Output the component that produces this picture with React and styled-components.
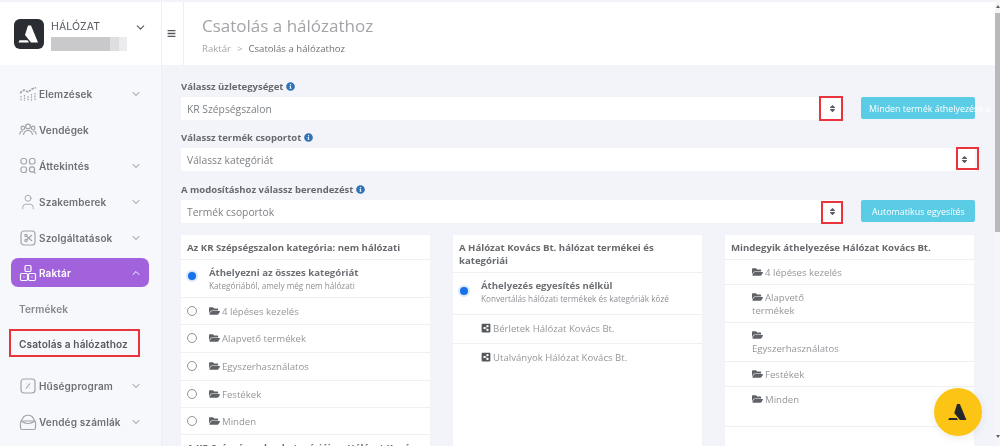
import React from "react";
import styled, { createGlobalStyle } from "styled-components";
import { ChevronDown, ChevronUp, User } from "lucide-react";
import { FaBars, FaFolderOpen, FaInfoCircle, FaShareAltSquare, FaSort } from "react-icons/fa";

const Global = createGlobalStyle`
  html, body { margin: 0; padding: 0; height: 446px; overflow: hidden; background: #f3f4f9; }
  * { box-sizing: border-box; }
`;

const Page = styled.div`
  position: relative;
  width: 1000px;
  height: 446px;
  display: flex;
  overflow: hidden;
  padding-top: 2px;
  background: #f3f4f9;
  font-family: "Open Sans", sans-serif;
  filter: blur(0.5px);
`;

const Sidebar = styled.aside`
  width: 162px;
  flex: none;
  background: #f7f8fc;
  border-right: 1px solid #eeeff4;
  display: flex;
  flex-direction: column;
  font-family: Inter, sans-serif;
`;

const Brand = styled.div`
  height: 63px;
  background: #fff;
  display: flex;
  align-items: center;
  padding: 0 15px 0 14px;
  gap: 7px;
`;

const BrandText = styled.div`
  flex: 1;
  display: flex;
  flex-direction: column;
  gap: 3px;
  padding-top: 3px;
`;

const BrandName = styled.div`
  font-size: 10.5px;
  line-height: 14px;
  color: #555a60;
  letter-spacing: 0.1px;
`;

const BrandBlur = styled.div`
  width: 76px;
  height: 14px;
  background: linear-gradient(90deg, #c9c9cc 0 78%, #dedee0 78% 90%, #ececee 90%);
`;

const BrandChevron = styled(ChevronDown)`
  flex: none;
  margin-top: -13px;
`;

const Nav = styled.nav`
  display: flex;
  flex-direction: column;
  padding: 11px 12px 0 11px;
`;

const NavItem = styled.div`
  height: ${(p) => p.$h || 36}px;
  display: flex;
  align-items: center;
  gap: 2px;
  padding: 0 7px 0 8px;
  border-radius: 7px;
  font-size: 10px;
  font-weight: 600;
  letter-spacing: 0.15px;
  white-space: nowrap;
  color: ${(p) => (p.$active ? "#fff" : "#6d7075")};
  background: ${(p) => (p.$active ? "#a162db" : "transparent")};
  & > span { flex: 1; }
`;

const NavIcon = styled.svg`
  width: 18px;
  height: 18px;
  flex: none;
  fill: none;
  stroke: ${(p) => (p.$active ? "#fff" : "#a2a4a9")};
  stroke-width: 1.2;
`;

const SubItem = styled.div`
  height: 35px;
  display: flex;
  align-items: center;
  padding-left: 8px;
  font-size: 10.1px;
  font-weight: 600;
  letter-spacing: 0.1px;
  color: ${(p) => (p.$current ? "#55585d" : "#85888d")};
`;

const Spacer = styled.div`
  height: ${(p) => p.$h}px;
  flex: none;
`;

const Main = styled.main`
  flex: 1;
  min-width: 0;
  display: flex;
  flex-direction: column;
`;

const Header = styled.header`
  height: 63px;
  flex: none;
  background: #fff;
  display: flex;
`;

const MenuCell = styled.div`
  width: 22px;
  flex: none;
  display: flex;
  align-items: center;
  justify-content: center;
  border-right: 1px solid #eeeff3;
  color: #55585c;
  font-size: 9px;
  padding-right: 2px;
`;

const Titles = styled.div`
  padding: 11px 0 0 18px;
`;

const Title = styled.h1`
  margin: 0;
  font-size: 17px;
  line-height: 26px;
  font-weight: 400;
  color: #a2a4a7;
`;

const Crumbs = styled.div`
  margin-top: 4px;
  display: flex;
  gap: 6px;
  font-size: 9.6px;
  line-height: 12px;
  color: #a6a8ab;
  & b { font-weight: 400; color: #6f7276; }
`;

const Content = styled.div`
  flex: 1;
  padding: 15px 25px 0 19px;
  overflow: hidden;
`;

const Label = styled.div`
  display: flex;
  align-items: center;
  gap: 3px;
  height: 12px;
  font-size: 9.5px;
  font-weight: 700;
  color: #66696d;
  & svg { color: #2f72b5; width: 9px; height: 9px; }
`;

const Row = styled.div`
  display: flex;
  gap: 18px;
  margin: 5px 0 ${(p) => p.$mb}px;
`;

const Select = styled.div`
  flex: 1;
  height: 23px;
  background: #fff;
  display: flex;
  align-items: center;
  justify-content: space-between;
  padding: 0 7px 0 6px;
  font-size: 10.3px;
  color: #7d8084;
  & svg { color: #5a5d61; width: 7px; height: 9px; }
`;

const ActionButton = styled.div`
  width: 114px;
  flex: none;
  height: 22px;
  background: #5accE6;
  border-radius: 2px;
  color: #fff;
  font-size: 8.9px;
  display: flex;
  align-items: center;
  padding-left: ${(p) => p.$pad}px;
  white-space: nowrap;
`;

const Columns = styled.div`
  margin-top: 12px;
  display: grid;
  grid-template-columns: 249px 249px 249px;
  gap: 23px;
`;

const Panel = styled.section`
  background: #fff;
  height: 230px;
  overflow: hidden;
`;

const PanelHead = styled.div`
  padding: 6px 6px 5px 6px;
  font-size: 9.6px;
  line-height: 13px;
  font-weight: 700;
  color: #66696d;
  border-bottom: 1px solid #eef0f2;
`;

const Item = styled.div`
  height: ${(p) => p.$h}px;
  border-bottom: 1px solid ${(p) => (p.$last ? "transparent" : "#eef0f2")};
  display: flex;
  align-items: flex-start;
  padding-top: ${(p) => p.$top || 7}px;
  font-size: 9.6px;
  line-height: 13px;
  color: #94979a;
`;

const RadioCell = styled.div`
  width: 28px;
  flex: none;
  padding: ${(p) => p.$top || 0}px 0 0 6px;
`;

const Radio = styled.span`
  display: block;
  width: ${(p) => (p.$on ? 12 : 10)}px;
  height: ${(p) => (p.$on ? 12 : 10)}px;
  margin: ${(p) => (p.$on ? "-1px" : "0")};
  border-radius: 50%;
  background: ${(p) => (p.$on ? "#1772ea" : "#fff")};
  border: ${(p) => (p.$on ? "2px solid #dbe8fb" : "1px solid #8f9194")};
`;

const ItemTitle = styled.div`
  font-size: 9.6px;
  font-weight: 700;
  color: #6c6f73;
`;

const ItemNote = styled.div`
  font-size: 8.2px;
  line-height: 13px;
  color: #8d9094;
`;

const Folder = styled(FaFolderOpen)`
  width: 11px;
  height: 10px;
  color: #5f6266;
  vertical-align: -1px;
  margin-right: 2px;
`;

const Share = styled(FaShareAltSquare)`
  width: 10px;
  height: 10px;
  color: #55585c;
  vertical-align: -1px;
  margin-right: 2px;
`;

const Indent = styled.div`
  padding-left: ${(p) => p.$l}px;
  max-width: ${(p) => (p.$narrow ? 92 : 240)}px;
`;

const Mark = styled.div`
  position: absolute;
  border: 2px solid #e8343a;
  left: ${(p) => p.$x}px;
  top: ${(p) => p.$y}px;
  width: ${(p) => p.$w}px;
  height: ${(p) => p.$h}px;
`;

const Fab = styled.div`
  position: absolute;
  left: 934px;
  top: 388px;
  width: 48px;
  height: 48px;
  border-radius: 50%;
  background: #fcc414;
  display: flex;
  align-items: center;
  justify-content: center;
  box-shadow: 0 2px 8px rgba(0, 0, 0, 0.08);
`;

const ScrollTrack = styled.div`
  position: absolute;
  right: 0;
  top: 0;
  width: 5px;
  height: 446px;
  background: #f6f6f7;
  display: flex;
  flex-direction: column;
  align-items: center;
  padding-top: 5px;
`;

const ScrollArrow = styled.div`
  width: 0;
  height: 0;
  border-left: 2.5px solid transparent;
  border-right: 2.5px solid transparent;
  border-bottom: ${(p) => (p.$down ? "0" : "3px solid #606060")};
  border-top: ${(p) => (p.$down ? "3px solid #606060" : "0")};
`;

const ScrollThumb = styled.div`
  width: 5px;
  margin: 5px 0 203px;
  height: 219px;
  background: #b9b9bb;
`;

const Logo = ({ size, bg, fg }) => (
  <svg width={size} height={size} viewBox="0 0 30 30" style={{ flex: "none" }}>
    {bg && <rect width="30" height="30" rx="6" fill={bg} />}
    <path d="M14 6.5 L17 6.5 L24 23.5 L17 23.5 L11 16 Z" fill={fg} />
    <path d="M5.5 21.3 H13.5 L15 23.5 H4.5 Z" fill={fg} />
  </svg>
);

const IconChart = () => (
  <NavIcon viewBox="0 0 18 18">
    <path d="M1 8 L5 5 L9 7 L13 4 L17 2.5" strokeWidth="1.6" strokeDasharray="2.5 1" />
    <path d="M2 11v5M5.5 10v6M9 11v5M12.5 9v7M16 8v8" strokeDasharray="1.6 1" />
  </NavIcon>
);
const IconUsers = () => (
  <NavIcon viewBox="0 0 18 18">
    <circle cx="9" cy="5.5" r="2.4" />
    <circle cx="3.8" cy="7" r="1.8" />
    <circle cx="14.2" cy="7" r="1.8" />
    <path d="M4.5 14 Q5 9.5 9 9.5 Q13 9.5 13.5 14" />
    <path d="M0.8 13.5 Q1 10 3.8 10M17.2 13.5 Q17 10 14.2 10" />
  </NavIcon>
);
const IconGrid = () => (
  <NavIcon viewBox="0 0 18 18">
    <rect x="2" y="1.5" width="5.5" height="5.5" rx="2" />
    <rect x="10.5" y="1.5" width="5.5" height="5.5" rx="2" />
    <rect x="2" y="10" width="5.5" height="5.5" rx="2" />
    <circle cx="13" cy="12.5" r="2.6" />
    <path d="M15 15l1.5 1.5" />
  </NavIcon>
);
const IconCut = () => (
  <NavIcon viewBox="0 0 18 18">
    <rect x="2" y="2" width="14" height="14" rx="3" />
    <circle cx="7" cy="6.5" r="1.2" />
    <circle cx="7" cy="11.5" r="1.2" />
    <path d="M8 7.5 L13 12M8 10.5 L13 6" />
  </NavIcon>
);
const IconBoxes = ({ active }) => (
  <NavIcon $active={active} viewBox="0 0 18 18">
    <rect x="6" y="1.5" width="6" height="6" rx="1.2" />
    <rect x="1.5" y="9.5" width="7" height="7" rx="1.2" />
    <rect x="9.5" y="9.5" width="7" height="7" rx="1.2" />
    <path d="M9 4.5v1M5 12.5v1M13 12.5v1" />
  </NavIcon>
);
const IconPercent = () => (
  <NavIcon viewBox="0 0 18 18">
    <rect x="2" y="2" width="14" height="14" rx="3" />
    <path d="M7 11.5 L11 6.5M7 7h.5M10.5 11h.5" />
  </NavIcon>
);
const IconInbox = () => (
  <NavIcon viewBox="0 0 18 18">
    <path d="M2 8 L5 3.5 Q9 1 13 3.5 L16 8" />
    <rect x="1.5" y="8" width="15" height="8.5" rx="1.5" />
    <path d="M2 8 Q9 13 16 8" />
  </NavIcon>
);

const Chev = ({ up, color }) => {
  const C = up ? ChevronUp : ChevronDown;
  return <C size={12} strokeWidth={2} color={color || "#85888c"} />;
};

const Folders1 = ["4 lépéses kezelés", "Alapvető termékek", "Egyszerhasználatos", "Festékek", "Minden"];
const h1 = [27, 28, 28, 27, 27];

export default function App() {
  return (
    <Page>
      <Global />
      <Sidebar>
        <Brand>
          <Logo size={30} bg="#2a2e33" fg="#fff" />
          <BrandText>
            <BrandName>HÁLÓZAT</BrandName>
            <BrandBlur />
          </BrandText>
          <BrandChevron size={13} color="#55585d" strokeWidth={2} />
        </Brand>
        <Nav>
          <NavItem><IconChart /><span>Elemzések</span><Chev /></NavItem>
          <NavItem><IconUsers /><span>Vendégek</span></NavItem>
          <NavItem><IconGrid /><span>Áttekintés</span><Chev /></NavItem>
          <NavItem><NavIcon as={User} size={18} strokeWidth={1} color="#a2a4a9" /><span>Szakemberek</span><Chev /></NavItem>
          <NavItem><IconCut /><span>Szolgáltatások</span><Chev /></NavItem>
          <Spacer $h={2} />
          <NavItem $active $h={29}><IconBoxes active /><span>Raktár</span><Chev up color="#fff" /></NavItem>
          <Spacer $h={4} />
          <SubItem>Termékek</SubItem>
          <SubItem $current>Csatolás a hálózathoz</SubItem>
          <Spacer $h={7} />
          <NavItem><IconPercent /><span>Hűségprogram</span><Chev /></NavItem>
          <NavItem><IconInbox /><span>Vendég számlák</span><Chev /></NavItem>
        </Nav>
      </Sidebar>
      <Main>
        <Header>
          <MenuCell><FaBars /></MenuCell>
          <Titles>
            <Title>Csatolás a hálózathoz</Title>
            <Crumbs>Raktár <span>&gt;</span> <b>Csatolás a hálózathoz</b></Crumbs>
          </Titles>
        </Header>
        <Content>
          <Label>Válassz üzletegységet <FaInfoCircle /></Label>
          <Row $mb={11}>
            <Select>KR Szépségszalon <FaSort /></Select>
            <ActionButton $pad={8}>Minden termék áthelyezése a</ActionButton>
          </Row>
          <Label>Válassz termék csoportot <FaInfoCircle /></Label>
          <Row $mb={12}>
            <Select>Válassz kategóriát <FaSort /></Select>
          </Row>
          <Label>A modosításhoz válassz berendezést <FaInfoCircle /></Label>
          <Row $mb={0}>
            <Select>Termék csoportok <FaSort /></Select>
            <ActionButton $pad={11}>Automatikus egyesítés</ActionButton>
          </Row>
          <Columns>
            <Panel>
              <PanelHead>Az KR Szépségszalon kategória: nem hálózati</PanelHead>
              <Item $h={38} $top={6}>
                <RadioCell $top={5}><Radio $on /></RadioCell>
                <div>
                  <ItemTitle>Áthelyezni az összes kategóriát</ItemTitle>
                  <ItemNote>Kategóriából, amely még nem hálózati</ItemNote>
                </div>
              </Item>
              {Folders1.map((f, i) => (
                <Item key={f} $h={h1[i]}>
                  <RadioCell $top={1}><Radio /></RadioCell>
                  <div><Folder />{f}</div>
                </Item>
              ))}
              <PanelHead>A KR Szépségszalon kategóriája a Hálózat Kovács</PanelHead>
            </Panel>
            <Panel>
              <PanelHead>A Hálózat Kovács Bt. hálózat termékei és kategóriái</PanelHead>
              <Item $h={42} $top={6}>
                <RadioCell $top={7}><Radio $on /></RadioCell>
                <div>
                  <ItemTitle>Áthelyezés egyesítés nélkül</ItemTitle>
                  <ItemNote>Konvertálás hálózati termékek és kategóriák közé</ItemNote>
                </div>
              </Item>
              <Item $h={29}>
                <RadioCell />
                <div><Share />Bérletek Hálózat Kovács Bt.</div>
              </Item>
              <Item $h={29} $last>
                <RadioCell />
                <div><Share />Utalványok Hálózat Kovács Bt.</div>
              </Item>
            </Panel>
            <Panel>
              <PanelHead>Mindegyik áthelyezése Hálózat Kovács Bt.</PanelHead>
              <Item $h={25} $top={6}><Indent $l={27}><Folder />4 lépéses kezelés</Indent></Item>
              <Item $h={38} $top={6}><Indent $l={27} $narrow><Folder />Alapvető termékek</Indent></Item>
              <Item $h={39} $top={6}><Indent $l={27} $narrow><Folder />Egyszerhasználatos</Indent></Item>
              <Item $h={25} $top={6}><Indent $l={27}><Folder />Festékek</Indent></Item>
              <Item $h={40} $top={6}><Indent $l={27}><Folder />Minden</Indent></Item>
            </Panel>
          </Columns>
        </Content>
      </Main>
      <ScrollTrack>
        <ScrollArrow />
        <ScrollThumb />
        <ScrollArrow $down />
      </ScrollTrack>
      <Mark $x={9} $y={329} $w={131} $h={28} />
      <Mark $x={819} $y={96} $w={24} $h={25} />
      <Mark $x={956} $y={147} $w={23} $h={23} />
      <Mark $x={821} $y={201} $w={22} $h={23} />
      <Fab><Logo size={28} fg="#24272b" /></Fab>
    </Page>
  );
}
